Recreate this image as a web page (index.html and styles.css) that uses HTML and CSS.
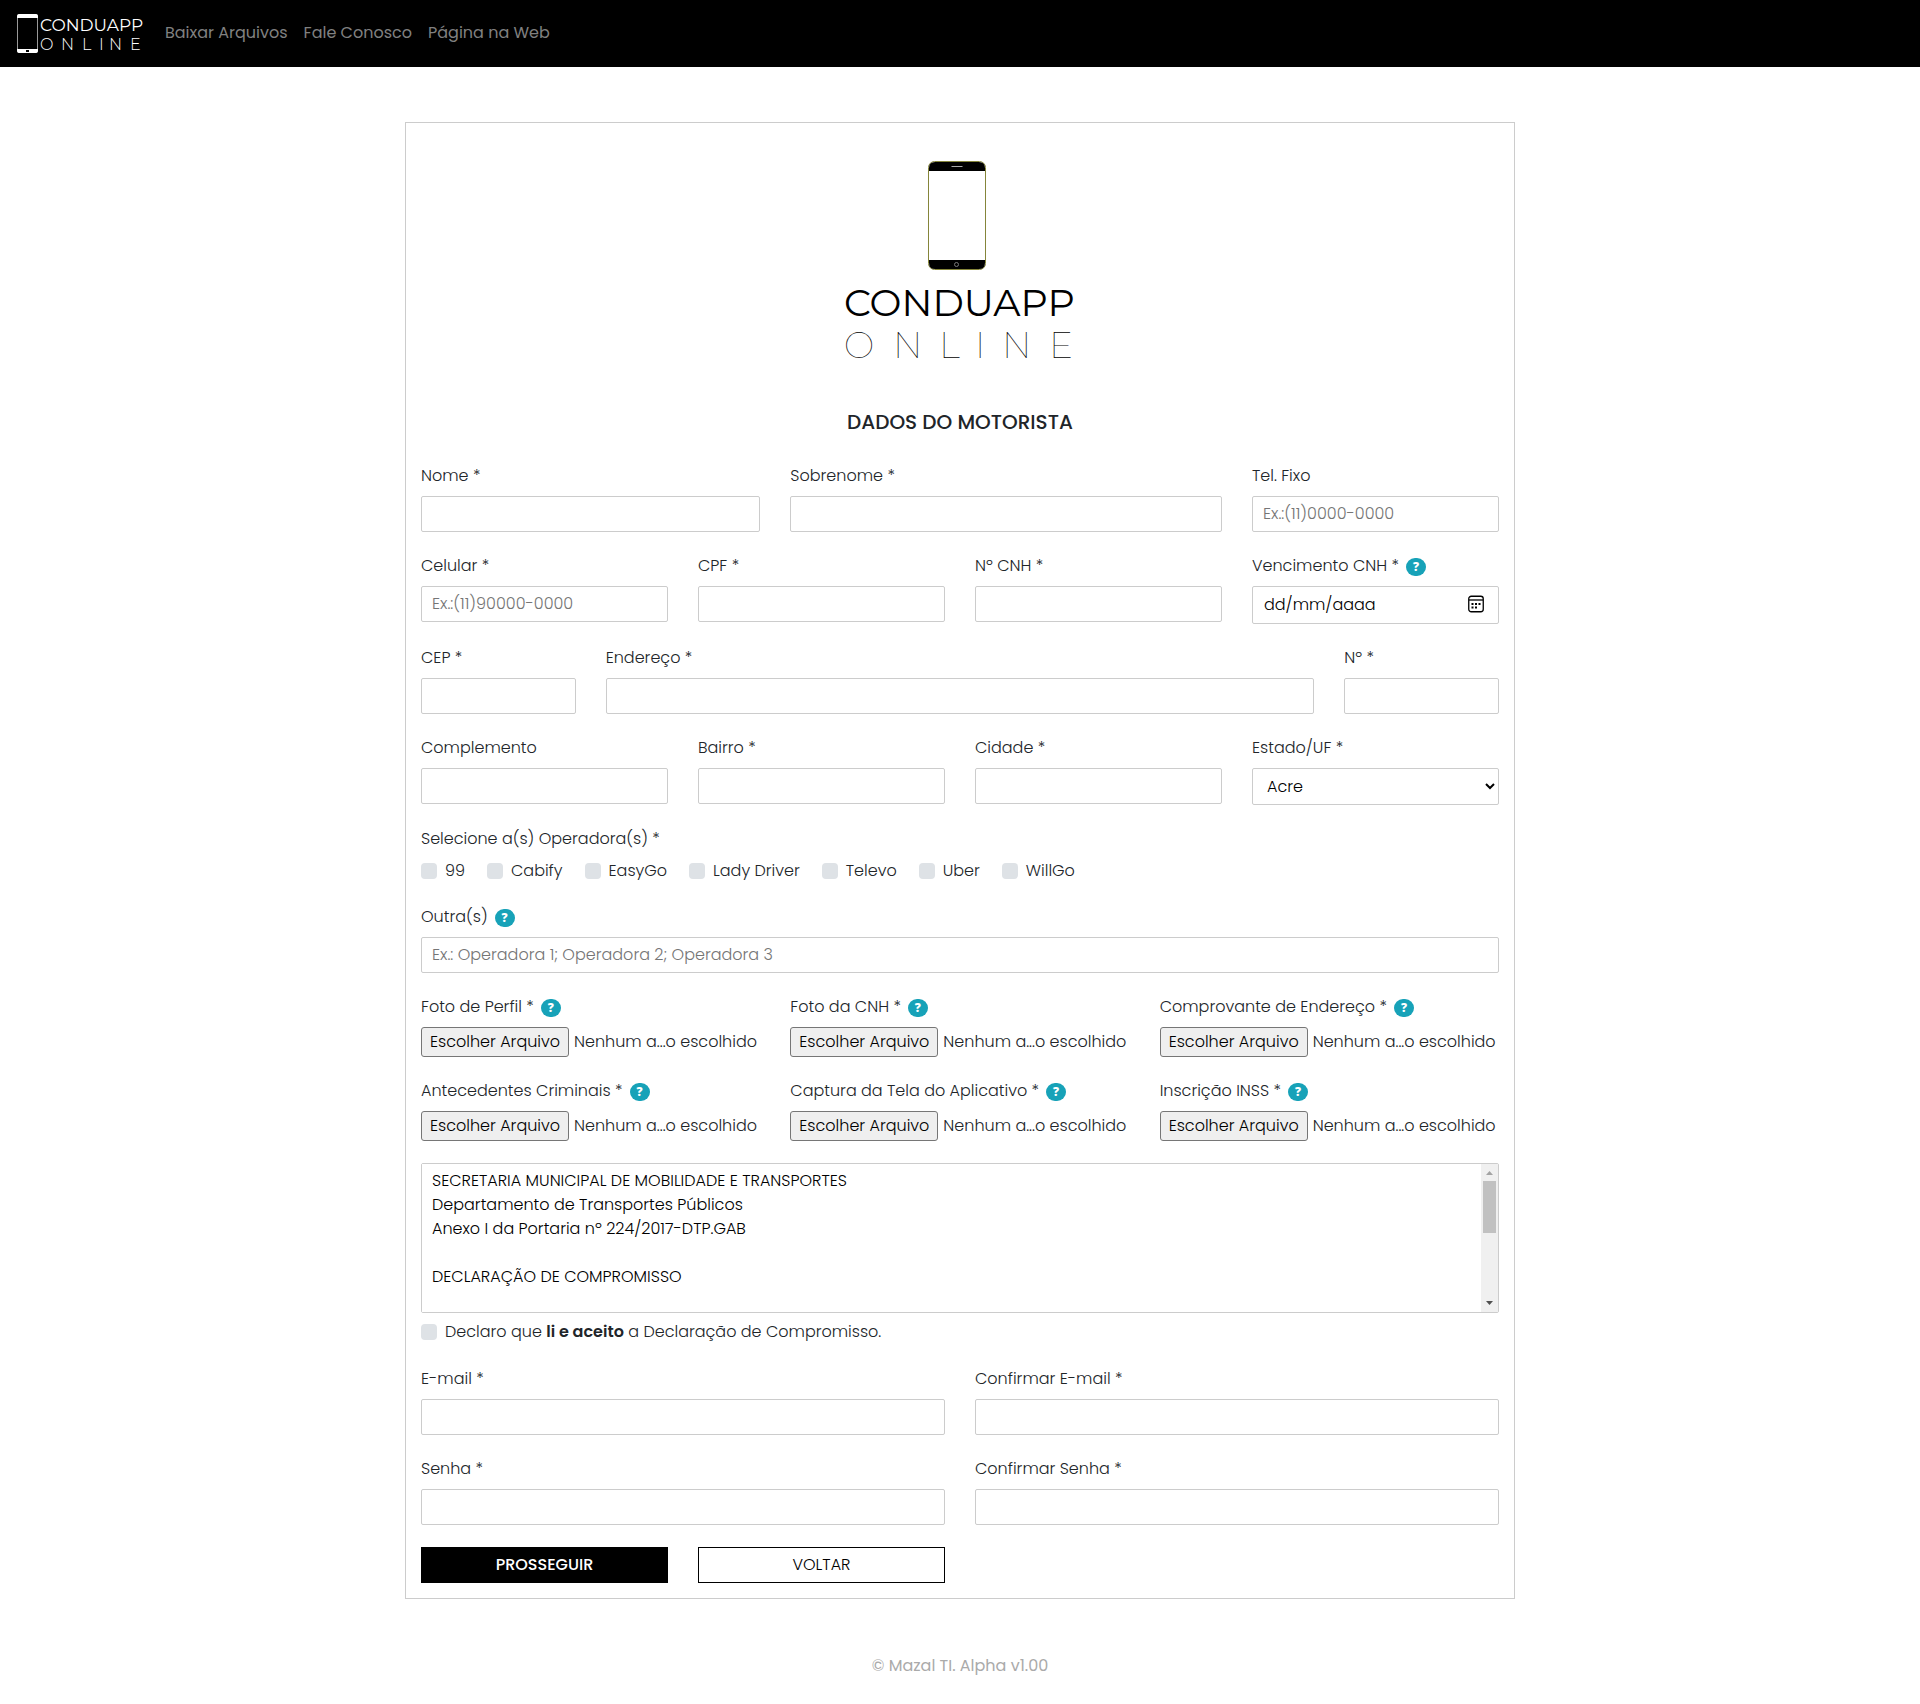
FILE: index.html
```html
<!DOCTYPE html>
<html lang="pt-BR">
<head>
<meta charset="utf-8">
<meta name="viewport" content="width=device-width, initial-scale=1">
<title>Conduapp Online</title>
<link rel="stylesheet" href="styles.css">
</head>
<body>
<header class="navbar">
  <a class="brand" href="#" aria-label="Conduapp Online">
    <svg width="126" height="40" viewBox="0 0 126 40">
      <rect x="1.5" y=".5" width="20" height="38" rx="2" fill="none" stroke="#999"/>
      <path d="M1 4V2q0-2 2-2h17q2 0 2 2v2zM1 35v2q0 2 2 2h17q2 0 2-2v-2z" fill="#fff"/>
      <rect x="10" y="36" width="3" height="2" fill="#000"/>
      <text class="brand-top" x="24" y="17">CONDUAPP</text>
      <text class="brand-bottom" x="24 45 66 83 93 114" y="36">ONLINE</text>
    </svg>
  </a>
  <nav class="nav-links">
    <a href="#">Baixar Arquivos</a>
    <a href="#">Fale Conosco</a>
    <a href="#">Página na Web</a>
  </nav>
</header>

<main>
  <form class="card">
    <svg class="logo" width="228" height="200" viewBox="0 0 228 200" role="img" aria-label="Conduapp Online">
      <rect x="82.500" y="1.500" width="57" height="108" rx="6" fill="#fff" stroke="#85853a"/>
      <path d="M83 11V8q0-6 6-6h44q6 0 6 6v3zM83 100v3q0 6 6 6h44q6 0 6-6v-3z" fill="#000"/>
      <path d="M105.500 6.500h11" stroke="#aaa"/>
      <circle cx="110.500" cy="104.500" r="2" fill="none" stroke="#777"/>
      <text class="logo-top" x="-2" y="156">CONDUAPP</text>
      <text class="logo-bottom" x="-2 47 93 129 156 203" y="198">ONLINE</text>
    </svg>
    <h1>DADOS DO MOTORISTA</h1>

    <div class="row">
      <div class="field span-4"><label for="nome">Nome *</label><input id="nome" type="text"></div>
      <div class="field span-5"><label for="sobrenome">Sobrenome *</label><input id="sobrenome" type="text"></div>
      <div class="field span-3"><label for="tel">Tel. Fixo</label><input id="tel" type="tel" placeholder="Ex.:(11)0000-0000"></div>
    </div>

    <div class="row">
      <div class="field span-3"><label for="celular">Celular *</label><input id="celular" type="tel" placeholder="Ex.:(11)90000-0000"></div>
      <div class="field span-3"><label for="cpf">CPF *</label><input id="cpf" type="text"></div>
      <div class="field span-3"><label for="cnh">Nº CNH *</label><input id="cnh" type="text"></div>
      <div class="field span-3">
        <div class="label-line"><label for="vencimento">Vencimento CNH *</label><button type="button" class="help" aria-label="Ajuda">?</button></div>
        <div class="date">
          <input id="vencimento" type="text" placeholder="dd/mm/aaaa">
          <svg width="16" height="18" viewBox="0 0 16 18" aria-hidden="true">
            <rect x=".75" y="1.250" width="14.500" height="15.500" rx="2.500" fill="none" stroke="#000" stroke-width="1.300"/>
            <path d="M1 5h14" stroke="#000" stroke-width="1.300"/>
            <path d="M7 8h2v2H7zM10.500 8h2v2h-2zM3.500 11.500h2v2h-2zM7 11.500h2v2H7zM3.500 8h2v2h-2z" fill="#000"/>
          </svg>
        </div>
      </div>
    </div>

    <div class="row">
      <div class="field span-2"><label for="cep">CEP *</label><input id="cep" type="text"></div>
      <div class="field span-8"><label for="endereco">Endereço *</label><input id="endereco" type="text"></div>
      <div class="field span-2"><label for="numero">Nº *</label><input id="numero" type="text"></div>
    </div>

    <div class="row">
      <div class="field span-3"><label for="complemento">Complemento</label><input id="complemento" type="text"></div>
      <div class="field span-3"><label for="bairro">Bairro *</label><input id="bairro" type="text"></div>
      <div class="field span-3"><label for="cidade">Cidade *</label><input id="cidade" type="text"></div>
      <div class="field span-3"><label for="uf">Estado/UF *</label><select id="uf"><option>Acre</option><option>Alagoas</option><option>Amapá</option></select></div>
    </div>

    <fieldset class="operators">
      <legend>Selecione a(s) Operadora(s) *</legend>
      <div class="checks">
        <label class="check"><input type="checkbox">99</label>
        <label class="check"><input type="checkbox">Cabify</label>
        <label class="check"><input type="checkbox">EasyGo</label>
        <label class="check"><input type="checkbox">Lady Driver</label>
        <label class="check"><input type="checkbox">Televo</label>
        <label class="check"><input type="checkbox">Uber</label>
        <label class="check"><input type="checkbox">WillGo</label>
      </div>
    </fieldset>

    <div class="field">
      <div class="label-line"><label for="outras">Outra(s)</label><button type="button" class="help" aria-label="Ajuda">?</button></div>
      <input id="outras" type="text" placeholder="Ex.: Operadora 1; Operadora 2; Operadora 3">
    </div>

    <div class="row">
      <div class="field span-4">
        <div class="label-line"><label for="perfil">Foto de Perfil *</label><button type="button" class="help" aria-label="Ajuda">?</button></div>
        <div class="file"><span class="file-button">Escolher Arquivo</span><span>Nenhum a...o escolhido</span><input id="perfil" type="file"></div>
      </div>
      <div class="field span-4">
        <div class="label-line"><label for="foto-cnh">Foto da CNH *</label><button type="button" class="help" aria-label="Ajuda">?</button></div>
        <div class="file"><span class="file-button">Escolher Arquivo</span><span>Nenhum a...o escolhido</span><input id="foto-cnh" type="file"></div>
      </div>
      <div class="field span-4">
        <div class="label-line"><label for="comprovante">Comprovante de Endereço *</label><button type="button" class="help" aria-label="Ajuda">?</button></div>
        <div class="file"><span class="file-button">Escolher Arquivo</span><span>Nenhum a...o escolhido</span><input id="comprovante" type="file"></div>
      </div>
    </div>

    <div class="row">
      <div class="field span-4">
        <div class="label-line"><label for="antecedentes">Antecedentes Criminais *</label><button type="button" class="help" aria-label="Ajuda">?</button></div>
        <div class="file"><span class="file-button">Escolher Arquivo</span><span>Nenhum a...o escolhido</span><input id="antecedentes" type="file"></div>
      </div>
      <div class="field span-4">
        <div class="label-line"><label for="captura">Captura da Tela do Aplicativo *</label><button type="button" class="help" aria-label="Ajuda">?</button></div>
        <div class="file"><span class="file-button">Escolher Arquivo</span><span>Nenhum a...o escolhido</span><input id="captura" type="file"></div>
      </div>
      <div class="field span-4">
        <div class="label-line"><label for="inss">Inscrição INSS *</label><button type="button" class="help" aria-label="Ajuda">?</button></div>
        <div class="file"><span class="file-button">Escolher Arquivo</span><span>Nenhum a...o escolhido</span><input id="inss" type="file"></div>
      </div>
    </div>

    <div class="terms">
      <div class="terms-box">
        <textarea aria-label="Declaração de Compromisso" readonly>SECRETARIA MUNICIPAL DE MOBILIDADE E TRANSPORTES
Departamento de Transportes Públicos
Anexo I da Portaria nº 224/2017-DTP.GAB

DECLARAÇÃO DE COMPROMISSO</textarea>
        <div class="scrollbar" aria-hidden="true">
          <svg width="17" height="17" viewBox="0 0 17 17"><path d="M5 11l3.500-4L12 11z" fill="#a3a3a3"/></svg>
          <div class="thumb"></div>
          <svg width="17" height="17" viewBox="0 0 17 17"><path d="M5 6h7l-3.500 4z" fill="#505050"/></svg>
        </div>
      </div>
      <label class="check"><input type="checkbox"><span>Declaro que <b>li e aceito</b> a Declaração de Compromisso.</span></label>
    </div>

    <div class="row">
      <div class="field span-6"><label for="email">E-mail *</label><input id="email" type="email"></div>
      <div class="field span-6"><label for="email2">Confirmar E-mail *</label><input id="email2" type="email"></div>
    </div>

    <div class="row">
      <div class="field span-6"><label for="senha">Senha *</label><input id="senha" type="password"></div>
      <div class="field span-6"><label for="senha2">Confirmar Senha *</label><input id="senha2" type="password"></div>
    </div>

    <div class="row">
      <button type="submit" class="btn btn-dark span-3">PROSSEGUIR</button>
      <button type="button" class="btn span-3">VOLTAR</button>
    </div>
  </form>
</main>

<footer>© Mazal TI. Alpha v1.00</footer>
</body>
</html>
```
FILE: styles.css
```css
* { box-sizing: border-box; }

body {
  margin: 0;
  background: #fff;
  color: #212529;
  font: 300 16px/24px Poppins, Inter, sans-serif;
}

input, select, textarea, button { font: inherit; }

.navbar {
  display: flex;
  align-items: center;
  height: 67px;
  padding: 0 16px;
  background: #000;
}

.brand { display: block; height: 40px; }

.brand svg { display: block; overflow: visible; }

.brand text { fill: #fff; font-family: Montserrat, Poppins, Inter, sans-serif; }

.brand-top { font-size: 17px; font-weight: 400; }

.brand-bottom { font-size: 16px; font-weight: 300; }

.nav-links {
  display: flex;
  gap: 16px;
  margin-left: 23px;
  padding-bottom: 2px;
}

.nav-links a {
  color: #808080;
  font-weight: 400;
  text-decoration: none;
}

main { padding: 55px 16px; }

.card {
  display: flex;
  flex-direction: column;
  gap: 22px;
  max-width: 1110px;
  margin: 0 auto;
  padding: 37px 15px 15px;
  border: 1px solid #ccc;
}

.logo { align-self: center; overflow: visible; }

.logo-top { font: 400 38px Montserrat, Poppins, Inter, sans-serif; }

.logo-bottom { font: 100 36px Montserrat, Poppins, Inter, sans-serif; }

h1 {
  margin: 28px 0 8px;
  font-size: 20px;
  font-weight: 500;
  line-height: 24px;
  text-align: center;
}

.row {
  display: grid;
  grid-template-columns: repeat(12, minmax(0, 1fr));
  gap: 30px;
  align-items: start;
}

.span-2 { grid-column: span 2; }
.span-3 { grid-column: span 3; }
.span-4 { grid-column: span 4; }
.span-5 { grid-column: span 5; }
.span-6 { grid-column: span 6; }
.span-8 { grid-column: span 8; }

.field {
  display: flex;
  flex-direction: column;
  gap: 8px;
  white-space: nowrap;
}

.label-line { display: flex; align-items: center; gap: 7px; height: 24px; }

.help {
  width: 20px;
  height: 18px;
  margin-top: 2px;
  padding: 0;
  border: 0;
  border-radius: 9px;
  background: #17a2b8;
  color: #fff;
  font-family: "Open Sans", sans-serif;
  font-size: 12px;
  font-weight: 800;
  line-height: 18px;
}

.field > input, .date input, select {
  width: 100%;
  height: 36px;
  padding: 0 10px 2px;
  border: 1px solid #ccc;
  border-radius: 2px;
  background: #fff;
  color: #000;
}

input::placeholder { color: #757575; opacity: 1; }

.date { position: relative; }

.date input { display: block; height: 38px; padding-left: 11px; }

.date input::placeholder { color: #000; }

.date svg { position: absolute; top: 9px; right: 15px; }

.field > select { height: 37px; padding-bottom: 0; }

.operators { margin: 0; padding: 0; border: 0; }

.operators legend { padding: 0; margin-bottom: 8px; }

.checks { display: flex; flex-wrap: wrap; gap: 22px; }

.check { display: flex; align-items: center; gap: 8px; }

.check input {
  width: 16px;
  height: 16px;
  margin: 0;
  border-radius: 4px;
  background: #dee2e6;
  appearance: none;
}

.check input:checked { background: #17a2b8; }

.file {
  position: relative;
  display: flex;
  align-items: center;
  gap: 5px;
  height: 30px;
}

.file-button {
  width: 148px;
  border: 1px solid #767676;
  border-radius: 3px;
  background: #efefef;
  color: #000;
  line-height: 28px;
  text-align: center;
}

.file input {
  position: absolute;
  inset: 0;
  width: 100%;
  opacity: 0;
}

.terms { display: flex; flex-direction: column; gap: 7px; padding-bottom: 1px; }

.terms-box {
  display: flex;
  height: 150px;
  border: 1px solid #ccc;
  border-radius: 2px;
}

.terms-box textarea {
  flex: 1;
  padding: 5px 10px;
  border: 0;
  background: #fff;
  color: #000;
  resize: none;
}

.scrollbar {
  display: grid;
  grid-template-rows: 17px 1fr 17px;
  width: 17px;
  background: #f0f0f0;
}

.thumb { height: 52px; margin: 0 2px; background: #c1c1c1; }

b { font-weight: 600; }

.btn {
  height: 36px;
  padding: 0;
  border: 1px solid #000;
  background: #fff;
  color: #000;
}

.btn-dark { background: #000; color: #fff; font-weight: 500; }

footer {
  padding-bottom: 27px;
  color: #aaa;
  font-weight: 400;
  text-align: center;
}
```
